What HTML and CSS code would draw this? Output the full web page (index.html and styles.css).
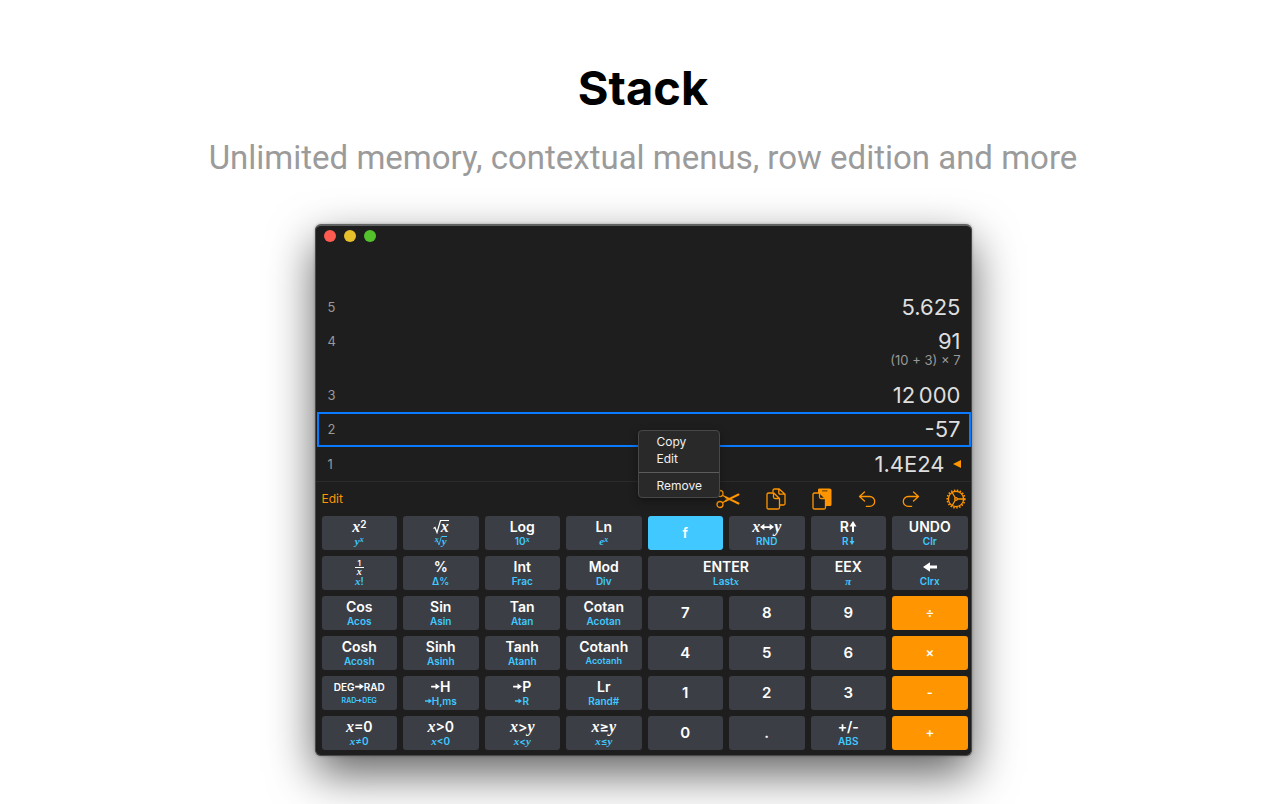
FILE: index.html
```
<!DOCTYPE html>
<html lang="en">
<head>
<meta charset="utf-8">
<title>Stack</title>
<link rel="stylesheet" href="styles.css">
</head>
<body>
<svg class="defs" aria-hidden="true">
  <symbol id="right" viewBox="0 0 10 8"><path d="M0 3h5V.6L10 4 5 7.4V5H0z"/></symbol>
  <symbol id="both" viewBox="0 0 16 8"><path d="M0 4l5-3.600V3h6V.4L16 4l-5 3.600V5H5v2.600z"/></symbol>
  <symbol id="left" viewBox="0 0 14 10"><path d="M14 3.500H7V.3L0 5l7 4.700V6.500h7z"/></symbol>
  <symbol id="up" viewBox="0 0 8 11"><path d="M3 11V5.500H.5L4 0l3.500 5.500H5V11z"/></symbol>
  <symbol id="down" viewBox="0 0 8 11"><path d="M3 0v5.500H.5L4 11l3.500-5.500H5V0z"/></symbol>
  <symbol id="root" viewBox="0 0 8 14"><path d="M.5 8.500L2 7.500l2 5L7.500.5H8" fill="none" stroke="currentColor" stroke-width="1.200"/></symbol>
</svg>
<header class="intro">
  <h1 class="title">Stack</h1>
  <p class="subtitle">Unlimited memory, contextual menus, row edition and more</p>
</header>
<main class="window">
  <div class="titlebar">
    <button class="light red" aria-label="Close"></button>
    <button class="light yellow" aria-label="Minimize"></button>
    <button class="light green" aria-label="Zoom"></button>
  </div>
  <ul class="stack">
    <li class="row"><span class="index">5</span><span class="value">5.625</span></li>
    <li class="row"><span class="index">4</span><span class="result"><span class="value">91</span><span class="formula">(10 + 3) × 7</span></span></li>
    <li class="row"><span class="index">3</span><span class="value">12&#8198;000</span></li>
    <li class="row selected"><span class="index">2</span><span class="value">-57</span></li>
    <li class="row"><span class="index">1</span><span class="value entry">1.4E24<svg class="marker" viewBox="0 0 8 8"><path d="M0 4l8-4v8z"/></svg></span></li>
  </ul>
  <div class="toolbar">
    <button class="edit">Edit</button>
    <div class="tools">
      <button class="tool wide" aria-label="Cut"><svg viewBox="0 0 24 20"><circle cx="4" cy="4.500" r="3"/><circle cx="4" cy="15.500" r="3"/><path d="M6.500 6.300l4 2.300M6.500 13.700l4-2.300"/><path class="blade" d="M10 8.300l12.500 6.200M10 11.700l12.500-6.200"/></svg></button>
      <button class="tool" aria-label="Copy"><svg viewBox="0 0 20 22"><path d="M7 3.500V2.500Q7 1 8.500 1h4.700L19 6.200V15.500q0 1.500-1.500 1.500H14M12.800 1v3.700q0 1.500 1.500 1.500H19M2.500 5h5.300L13.500 10.500V19.500q0 1.500-1.500 1.500H2.500Q1 21 1 19.500v-13Q1 5 2.500 5zM7.500 5v4q0 1.500 1.500 1.500h4.500"/></svg></button>
      <button class="tool" aria-label="Paste"><svg viewBox="0 0 20 22"><path class="solid" d="M6 5V1.500Q6 .5 7.500.5h10Q19.500.5 19.500 2v14.500q0 1.500-1.500 1.500H13.500v-8z"/><path class="sheet" d="M2.500 5h5.300L13.500 10.500V19.500q0 1.500-1.500 1.500H2.500Q1 21 1 19.500v-13Q1 5 2.500 5z"/><path d="M7.500 5v4q0 1.500 1.500 1.500h4.500"/><path class="notch" d="M10.500 2.800h4.500"/></svg></button>
      <button class="tool slim" aria-label="Undo"><svg viewBox="0 0 18 18"><path d="M6.500 2L1.500 6.500l5 4.500M1.500 6.500h10.300a4.900 4.900 0 0 1 0 9.800H8.300"/></svg></button>
      <button class="tool slim" aria-label="Redo"><svg viewBox="0 0 18 18"><path d="M11.500 2l5 4.500-5 4.500M16.500 6.500H6.200a4.900 4.900 0 0 0 0 9.800h3.500"/></svg></button>
      <button class="tool" aria-label="Settings"><svg viewBox="0 0 20 20"><circle cx="10" cy="10" r="7.600"/><circle class="teeth" cx="10" cy="10" r="8.800"/><circle cx="10" cy="10" r="1.300"/><path d="M11.500 10h6M9.200 8.700L6.200 3.500M9.200 11.300l-3 5.200"/></svg></button>
    </div>
  </div>
  <div class="keys">
    <button class="key"><span class="main"><i>x</i><sup class="two">2</sup></span><span class="alt"><i>y</i><sup><i>x</i></sup></span></button>
    <button class="key"><span class="main radical"><svg class="root"><use href="#root"/></svg><i class="over">x</i></span><span class="alt radical"><sup class="degree"><i>x</i></sup><svg class="root" viewBox="0 0 8 14"><use href="#root"/></svg><i class="over">y</i></span></button>
    <button class="key"><span class="main">Log</span><span class="alt">10<sup><i>x</i></sup></span></button>
    <button class="key"><span class="main">Ln</span><span class="alt"><i>e</i><sup><i>x</i></sup></span></button>
    <button class="key shift">f</button>
    <button class="key"><span class="main"><i>x</i><svg class="both"><use href="#both"/></svg><i>y</i></span><span class="alt">RND</span></button>
    <button class="key"><span class="main">R<svg class="vertical"><use href="#up"/></svg></span><span class="alt">R<svg class="vertical"><use href="#down"/></svg></span></button>
    <button class="key"><span class="main">UNDO</span><span class="alt">Clr</span></button>

    <button class="key"><span class="main fraction"><span>1</span><i class="denominator">x</i></span><span class="alt"><i>x</i>!</span></button>
    <button class="key"><span class="main">%</span><span class="alt">Δ%</span></button>
    <button class="key"><span class="main">Int</span><span class="alt">Frac</span></button>
    <button class="key"><span class="main">Mod</span><span class="alt">Div</span></button>
    <button class="key double"><span class="main">ENTER</span><span class="alt">Last<i>x</i></span></button>
    <button class="key"><span class="main">EEX</span><span class="alt"><i>π</i></span></button>
    <button class="key" aria-label="Backspace"><span class="main"><svg class="back"><use href="#left"/></svg></span><span class="alt">Clrx</span></button>

    <button class="key"><span class="main">Cos</span><span class="alt">Acos</span></button>
    <button class="key"><span class="main">Sin</span><span class="alt">Asin</span></button>
    <button class="key"><span class="main">Tan</span><span class="alt">Atan</span></button>
    <button class="key"><span class="main">Cotan</span><span class="alt">Acotan</span></button>
    <button class="key digit">7</button>
    <button class="key digit">8</button>
    <button class="key digit">9</button>
    <button class="key operator">÷</button>

    <button class="key"><span class="main">Cosh</span><span class="alt">Acosh</span></button>
    <button class="key"><span class="main">Sinh</span><span class="alt">Asinh</span></button>
    <button class="key"><span class="main">Tanh</span><span class="alt">Atanh</span></button>
    <button class="key"><span class="main">Cotanh</span><span class="alt small">Acotanh</span></button>
    <button class="key digit">4</button>
    <button class="key digit">5</button>
    <button class="key digit">6</button>
    <button class="key operator">×</button>

    <button class="key convert"><span class="main">DEG<svg class="arrow"><use href="#right"/></svg>RAD</span><span class="alt">RAD<svg class="arrow"><use href="#right"/></svg>DEG</span></button>
    <button class="key"><span class="main"><svg class="arrow"><use href="#right"/></svg>H</span><span class="alt"><svg class="arrow"><use href="#right"/></svg>H,ms</span></button>
    <button class="key"><span class="main"><svg class="arrow"><use href="#right"/></svg>P</span><span class="alt"><svg class="arrow"><use href="#right"/></svg>R</span></button>
    <button class="key"><span class="main">Lr</span><span class="alt">Rand#</span></button>
    <button class="key digit">1</button>
    <button class="key digit">2</button>
    <button class="key digit">3</button>
    <button class="key operator">-</button>

    <button class="key"><span class="main"><i>x</i>=0</span><span class="alt"><i>x</i>≠0</span></button>
    <button class="key"><span class="main"><i>x</i>&gt;0</span><span class="alt"><i>x</i>&lt;0</span></button>
    <button class="key"><span class="main"><i>x</i>&gt;<i>y</i></span><span class="alt"><i>x</i>&lt;<i>y</i></span></button>
    <button class="key"><span class="main"><i>x</i>≥<i>y</i></span><span class="alt"><i>x</i>≤<i>y</i></span></button>
    <button class="key digit">0</button>
    <button class="key digit">.</button>
    <button class="key"><span class="main">+/-</span><span class="alt">ABS</span></button>
    <button class="key operator">+</button>
  </div>
  <div class="menu" role="menu">
    <button class="item" role="menuitem">Copy</button>
    <button class="item" role="menuitem">Edit</button>
    <hr class="separator">
    <button class="item" role="menuitem">Remove</button>
  </div>
</main>
</body>
</html>
```
FILE: styles.css
```
* { box-sizing: border-box; }

body {
  margin: 0;
  padding: 59px 24px 48px;
  background: #fff;
  font-family: Inter, "Liberation Sans", sans-serif;
}

button {
  margin: 0;
  padding: 0;
  border: 0;
  background: none;
  color: inherit;
  font: inherit;
}

.defs { display: none; }

.intro { text-align: center; }

.title {
  margin: 0;
  font-size: 47px;
  font-weight: 700;
  line-height: 58px;
  color: #000;
}

.subtitle {
  margin: 19px 0 0;
  font-family: Roboto, "Liberation Sans", sans-serif;
  font-size: 33px;
  font-weight: 400;
  line-height: 44px;
  color: #9b9b9b;
}

.window {
  position: relative;
  max-width: 657px;
  margin: 44px auto 0;
  padding-bottom: 5px;
  border: 1px solid #48494a;
  border-top: 2px solid #606262;
  border-radius: 6px;
  background: #1e1e1e;
  color: #dedede;
  box-shadow: 0 18px 46px rgba(0, 0, 0, 0.62), 0 0 3px rgba(0, 0, 0, 0.3);
}

.titlebar {
  display: flex;
  gap: 8px;
  padding: 4px 8px 48px;
}

.light {
  width: 12px;
  height: 12px;
  border-radius: 50%;
}

.red { background: #ff5b51; }
.yellow { background: #e6c02a; }
.green { background: #53c22b; }

.stack {
  margin: 0;
  padding: 0 0 0 1px;
  list-style: none;
  border-bottom: 1px solid #2b2b2b;
}

.row {
  display: flex;
  justify-content: space-between;
  padding: 5px 10px 5px 11px;
  line-height: 24px;
}

.selected {
  padding: 3px 8px 4px 9px;
  border: 2px solid #0a7aff;
}

.index {
  font-size: 13px;
  color: #999;
}

.value { font-size: 22px; }

.result {
  display: flex;
  flex-direction: column;
  align-items: flex-end;
}

.formula {
  padding-bottom: 6px;
  font-size: 13px;
  line-height: 14px;
  color: #999;
}

.entry {
  display: flex;
  align-items: center;
  gap: 8px;
}

.marker {
  width: 8px;
  height: 8px;
  fill: #ff9500;
}

.toolbar {
  display: flex;
  justify-content: space-between;
  align-items: center;
  height: 34px;
  padding: 0 5px 1px 6px;
  color: #ff9500;
}

.edit { font-size: 12px; }

.tools {
  display: flex;
  align-items: center;
  gap: 26px;
}

.tool {
  display: flex;
  width: 20px;
}

.wide { width: 24px; }
.slim { width: 18px; }

.tool svg {
  width: 100%;
  fill: none;
  stroke: currentColor;
  stroke-width: 1.3;
  stroke-linecap: round;
  stroke-linejoin: round;
}

.tool .solid {
  fill: currentColor;
  stroke: none;
}

.tool .sheet { fill: #1e1e1e; }
.tool .blade { stroke-width: 2; }
.tool .notch { stroke: #7a4a05; }

.tool .teeth {
  stroke-width: 1.6;
  stroke-linecap: butt;
  stroke-dasharray: 1.5 1.5;
}

.keys {
  display: grid;
  grid-template-columns: repeat(8, 1fr);
  grid-auto-rows: 34px;
  gap: 6px;
  padding: 0 3px 0 6px;
}

.key {
  display: flex;
  flex-direction: column;
  align-items: center;
  justify-content: center;
  min-width: 0;
  border-radius: 3px;
  background: #3c3e45;
  color: #fff;
  font-size: 14px;
  font-weight: 600;
}

.double { grid-column: span 2; }
.digit { font-size: 15px; }
.shift { background: #40c8ff; }
.operator { background: #ff9500; font-size: 13px; }
.digit, .shift, .operator { padding-bottom: 2px; }

.main,
.alt {
  display: flex;
  align-items: center;
  justify-content: center;
}

.main { height: 14px; line-height: 14px; }

.alt {
  height: 12px;
  margin-top: 1px;
  font-size: 10px;
  line-height: 12px;
  color: #40c8ff;
}

.key i {
  font-family: "Liberation Serif", serif;
  font-size: 16px;
  font-weight: 700;
}

.key .alt i { font-size: 11px; }

.key sup {
  align-self: flex-start;
  font-size: 8px;
  line-height: 8px;
}

.key .two { font-size: 10px; }
.key sup i, .key .alt sup i { font-size: 8px; }
.key .small { font-size: 9px; }

.convert .main { font-size: 10px; }
.convert .alt { font-size: 7px; }

.key svg { fill: currentColor; }
.arrow { width: 9px; height: 7px; }
.alt .arrow { width: 7px; height: 6px; }
.convert .alt .arrow { width: 6px; height: 5px; }
.both { width: 14px; height: 8px; }
.back { width: 14px; height: 10px; }
.vertical { width: 8px; height: 11px; }
.alt .vertical { width: 6px; height: 8px; }

.root { width: 8px; height: 14px; }
.alt .root { width: 6px; height: 10px; }
.key .alt .degree { margin-right: -3px; }

.over {
  height: 13px;
  border-top: 1px solid currentColor;
  line-height: 12px;
}

.alt .over { height: 10px; line-height: 8px; }

.key .fraction {
  flex-direction: column;
  font-size: 8px;
  line-height: 8px;
}

.key .denominator {
  width: 9px;
  border-top: 1px solid currentColor;
  font-size: 10px;
  line-height: 7px;
}

.menu {
  position: absolute;
  top: 204px;
  left: 322px;
  width: 82px;
  padding: 2px 0 3px;
  border: 1px solid #484848;
  border-radius: 4px;
  background: #292929;
  box-shadow: 0 3px 8px rgba(0, 0, 0, 0.35);
  color: #f0f0f0;
}

.item {
  display: block;
  width: 100%;
  padding-left: 18px;
  text-align: left;
  font-size: 12px;
  line-height: 17px;
}

.separator {
  height: 1px;
  margin: 5px 0 4px;
  border: 0;
  background: #5c5c5c;
}
```
